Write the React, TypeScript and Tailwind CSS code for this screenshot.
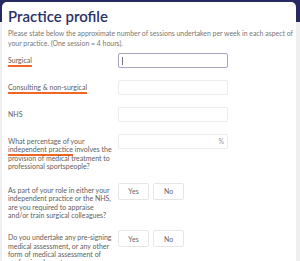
import React from "react";

const font = { fontFamily: "Lato, 'Open Sans', sans-serif" };

function Label({ children }: { children: React.ReactNode }) {
  return (
    <div className="w-[110px] shrink-0 pt-[3px] pr-[1px] text-[7px] leading-[8.3px] text-[#5e5e5e]">
      {children}
    </div>
  );
}

function Line({ children }: { children: React.ReactNode }) {
  return <div className="whitespace-nowrap">{children}</div>;
}

function U({ children }: { children: React.ReactNode }) {
  return (
    <span className="underline decoration-[#f26522] decoration-2 underline-offset-[1.5px]">
      {children}
    </span>
  );
}

function Input({ focused, suffix }: { focused?: boolean; suffix?: string }) {
  return (
    <div
      className={
        "flex h-[15px] w-[110px] items-center justify-between rounded-[2px] border px-[3px] " +
        (focused ? "border-[#a7a6c6]" : "border-[#ececec]")
      }
    >
      {focused ? <span className="h-[8px] w-px bg-[#777]" /> : <span />}
      {suffix ? <span className="text-[7px] text-[#999]">{suffix}</span> : null}
    </div>
  );
}

function YesNo() {
  return (
    <div className="flex gap-[4px]">
      <div className="flex h-[17px] w-[31px] items-center justify-center rounded-[2px] border border-[#e6e6e6] text-[7px] text-[#666]">
        Yes
      </div>
      <div className="flex h-[17px] w-[31px] items-center justify-center rounded-[2px] border border-[#e6e6e6] text-[7px] text-[#666]">
        No
      </div>
    </div>
  );
}

export default function App() {
  return (
    <div
      className="h-[261px] w-[300px] overflow-hidden bg-[linear-gradient(#272a5e_22px,#efefef_22px)] pl-[2px] pt-[2px]"
      style={font}
    >
      <div className="h-[300px] w-[294px] rounded-t-[5px] bg-white pl-[6px]">
        <div className="pt-[5px] text-[15px] font-semibold leading-[18px] text-[#2b3266]">
          Practice profile
        </div>
        <div className="mt-[3px] text-[6.9px] leading-[10px] text-[#777]">
          Please state below the approximate number of sessions undertaken per week in each aspect of your practice. (One session = 4 hours).
        </div>
        <div className="mt-[5px] flex flex-col">
          <div className="flex items-start">
            <Label>
              <U>Surgical</U>
            </Label>
            <Input focused />
          </div>
          <div className="mt-[12px] flex items-start">
            <Label>
              <U>Consulting &amp; non-surgical</U>
            </Label>
            <Input />
          </div>
          <div className="mt-[12px] flex items-start">
            <Label>NHS</Label>
            <Input />
          </div>
          <div className="mt-[12px] flex items-start">
            <Label>
              <Line>What percentage of your</Line>
              <Line>
                <U>independent practice</U> involves the
              </Line>
              <Line>provision of medical treatment to</Line>
              <Line>professional sportspeople?</Line>
            </Label>
            <Input suffix="%" />
          </div>
          <div className="mt-[13px] flex items-start">
            <Label>
              <Line>As part of your role in either your</Line>
              <Line>independent practice or the NHS,</Line>
              <Line>are you required to appraise</Line>
              <Line>and/or train surgical colleagues?</Line>
            </Label>
            <YesNo />
          </div>
          <div className="mt-[11px] flex items-start">
            <Label>
              <Line>Do you undertake any pre-signing</Line>
              <Line>medical assessment, or any other</Line>
              <Line>form of medical assessment of</Line>
              <Line>professional sportspersons on</Line>
            </Label>
            <YesNo />
          </div>
        </div>
      </div>
    </div>
  );
}
